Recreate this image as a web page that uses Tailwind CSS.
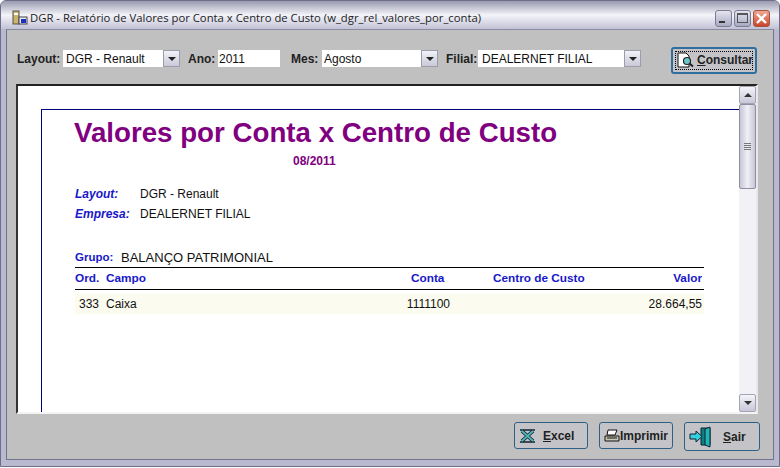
<!DOCTYPE html>
<html lang="pt">
  <head>
    <meta charset="UTF-8" />
    <title>DGR - Relatório de Valores por Conta x Centro de Custo</title>
    <script src="https://cdn.jsdelivr.net/npm/@tailwindcss/browser@4"></script>
  </head>
  <body class="w-[780px] h-[468px] overflow-hidden bg-white font-['Liberation_Sans',sans-serif]">
    <div class="w-[780px] h-[467px] flex flex-col border border-[#6e6e88] rounded-t-md overflow-hidden bg-[#b9b9cf]">
      <!-- title bar -->
      <div class="h-[28px] shrink-0 flex items-center pt-[6px] pl-[11px] pr-[9px] bg-gradient-to-b from-[#9a9ab0] via-[#f4f4fa] to-[#c2c2d6]">
        <svg class="w-[16px] h-[16px] mr-[2px]" viewBox="0 0 16 16">
          <rect x="1" y="1" width="6" height="13" fill="#c9b46a" stroke="#554" />
          <rect x="2" y="3" width="4" height="2" fill="#fff" />
          <rect x="7" y="7" width="8" height="7" fill="#e8e8e8" stroke="#445" />
          <rect x="9" y="9" width="5" height="4" fill="#1c2fc0" />
        </svg>
        <span class="font-['Open_Sans',sans-serif] text-[11.3px] text-[#222] whitespace-nowrap">DGR - Relatório de Valores por Conta x Centro de Custo (w_dgr_rel_valores_por_conta)</span>
        <div class="ml-auto flex gap-[2px]">
          <div class="w-[17px] h-[17px] rounded-[3px] border border-[#7b7b94] bg-gradient-to-b from-[#e4e4f0] to-[#a9a9c2] flex items-end pb-[3px] pl-[3px]">
            <div class="w-[6px] h-[2px] bg-[#333]"></div>
          </div>
          <div class="w-[17px] h-[17px] rounded-[3px] border border-[#7b7b94] bg-gradient-to-b from-[#e4e4f0] to-[#a9a9c2] flex items-center justify-center">
            <div class="w-[11px] h-[10px] border border-[#555] border-t-2"></div>
          </div>
          <div class="w-[17px] h-[17px] rounded-[3px] border border-[#a5523f] bg-gradient-to-b from-[#eea893] to-[#c9432a] flex items-center justify-center">
            <svg class="w-[13px] h-[13px]" viewBox="0 0 13 13"><path d="M2 2 L11 11 M11 2 L2 11" stroke="#fff" stroke-width="2.4" /></svg>
          </div>
        </div>
      </div>

      <!-- window body -->
      <div class="flex-1 min-h-0 mx-[5px] flex flex-col bg-[#c0c0c0] border-x border-b border-[#73738c] border-t border-t-[#8a8aa0] pl-[9px] pr-[15px]">
        <!-- filters -->
        <div class="h-[54px] shrink-0 flex items-center pt-[3px] text-[12px] text-[#111]">
          <b class="text-[#222] w-[46px] ml-[1px]">Layout:</b>
          <div class="w-[100px] h-[17px] flex bg-white items-center pl-[3px]">DGR - Renault</div>
          <div class="w-[17px] h-[17px] flex items-center justify-center bg-gradient-to-b from-[#f2f2f8] to-[#c9c9d8] border border-[#9c9cac]"><div class="border-x-[4px] border-x-transparent border-t-[4px] border-t-[#222]"></div></div>
          <b class="text-[#222] ml-[8px] w-[30px]">Ano:</b>
          <div class="w-[62px] h-[17px] flex bg-white items-center pl-[1px]">2011</div>
          <b class="text-[#222] ml-[11px] w-[31px]">Mes:</b>
          <div class="w-[99px] h-[17px] flex bg-white items-center pl-[2px]">Agosto</div>
          <div class="w-[17px] h-[17px] flex items-center justify-center bg-gradient-to-b from-[#f2f2f8] to-[#c9c9d8] border border-[#9c9cac]"><div class="border-x-[4px] border-x-transparent border-t-[4px] border-t-[#222]"></div></div>
          <b class="text-[#222] ml-[8px] w-[32px]">Filial:</b>
          <div class="w-[146px] h-[17px] flex bg-white items-center pl-[4px]">DEALERNET FILIAL</div>
          <div class="w-[17px] h-[17px] flex items-center justify-center bg-gradient-to-b from-[#f2f2f8] to-[#c9c9d8] border border-[#9c9cac]"><div class="border-x-[4px] border-x-transparent border-t-[4px] border-t-[#222]"></div></div>
          <button class="ml-[30px] mt-[3px] w-[86px] h-[27px] rounded-[3px] border-2 border-[#2f6f9f] bg-[#c4c4c8] p-[2px]">
            <span class="h-full flex items-center border border-dotted border-black pl-[1px] font-bold text-[12px] text-[#222]">
              <svg class="w-[20px] h-[17px] shrink-0" viewBox="0 0 20 17">
                <path d="M1 1 H9 L12 4 V15 H1 Z" fill="#fff" stroke="#111" />
                <circle cx="10" cy="9" r="3.5" fill="#6cc7c7" stroke="#222" stroke-width="1.2" />
                <path d="M12.5 11.5 L16 14.5" stroke="#222" stroke-width="2" />
              </svg>
              <span><u>C</u>onsultar</span>
            </span>
          </button>
        </div>

        <!-- report viewport -->
        <div class="h-[330px] shrink-0 flex border-t-2 border-l-2 border-t-[#222] border-l-[#333] border-b-2 border-r-2 border-b-[#f4f4f4] border-r-[#e8e8e8] bg-white">
          <div class="flex-1 min-w-0 overflow-hidden pt-[23px] pl-[23px]">
            <div class="h-[340px] border-t border-l border-[#00007f] pl-[33px]">
              <h1 class="font-bold text-[27.7px] leading-[30px] text-[#800080] mt-[8px] ml-[-1px] whitespace-nowrap">Valores por Conta x Centro de Custo</h1>
              <p class="font-bold text-[12px] leading-[14px] text-[#800080] ml-[218px] mt-[6px]">08/2011</p>
              <div class="flex items-center h-[20px] mt-[16px] text-[12px]">
                <i class="font-bold text-[#1818c8] w-[65px]">Layout:</i><span class="text-[#111]">DGR - Renault</span>
              </div>
              <div class="flex items-center h-[20px] text-[12px]">
                <i class="font-bold text-[#1818c8] w-[65px]">Empresa:</i><span class="text-[#111]">DEALERNET FILIAL</span>
              </div>
              <div class="flex items-center h-[20px] mt-[24px] w-[629px]">
                <b class="text-[11.5px] text-[#1818c8] w-[46px]">Grupo:</b><span class="text-[13px] text-[#111]">BALANÇO PATRIMONIAL</span>
              </div>
              <div class="w-[629px] h-[23px] flex items-center border-y border-black font-bold text-[11.8px] text-[#1818c8] mt-[-1px] whitespace-nowrap">
                <span class="w-[31px]">Ord.</span>
                <span class="w-[305px]">Campo</span>
                <span class="w-[33px] text-right mr-[49px]">Conta</span>
                <span class="w-[91px]">Centro de Custo</span>
                <span class="w-[118px] text-right">Valor</span>
              </div>
              <div class="w-[629px] h-[20px] mt-[4px] flex items-center bg-[#fbfbf0] text-[12px] text-[#111]">
                <span class="w-[31px] pl-[4px]">333</span>
                <span class="w-[300px]">Caixa</span>
                <span class="w-[44px] text-right">1111100</span>
                <span class="flex-1 text-right pr-[2px]">28.664,55</span>
              </div>
            </div>
          </div>
          <!-- scrollbar -->
          <div class="w-[17px] shrink-0 flex flex-col bg-[#f1f1f6]">
            <div class="h-[18px] shrink-0 flex items-center justify-center rounded-[2px] border border-[#a3a3b3] bg-gradient-to-b from-[#f4f4fa] to-[#c7c7d8]"><div class="border-x-[4px] border-x-transparent border-b-[4px] border-b-[#333]"></div></div>
            <div class="h-[85px] shrink-0 flex flex-col items-center justify-center gap-[1px] rounded-[2px] border border-[#8f8f9f] bg-gradient-to-r from-[#c6c6d8] via-[#f0f0f6] to-[#c6c6d8]">
              <div class="w-[7px] h-px bg-[#777]"></div><div class="w-[7px] h-px bg-[#777]"></div><div class="w-[7px] h-px bg-[#777]"></div><div class="w-[7px] h-px bg-[#777]"></div>
            </div>
            <div class="flex-1"></div>
            <div class="h-[18px] shrink-0 flex items-center justify-center rounded-[2px] border border-[#a3a3b3] bg-gradient-to-b from-[#f4f4fa] to-[#c7c7d8]"><div class="border-x-[4px] border-x-transparent border-t-[4px] border-t-[#333]"></div></div>
          </div>
        </div>

        <!-- footer buttons -->
        <div class="flex justify-end items-start mt-[8px] mr-[-2px] font-bold text-[12px] text-[#222]">
          <button class="w-[74px] h-[27px] rounded-[3px] border border-[#2f5f85] bg-[#c4c4c8] flex items-center pl-[4px]">
            <svg class="w-[18px] h-[14px] shrink-0" viewBox="0 0 18 14">
              <path d="M1 1 H16 M1 13 H16" stroke="#123" stroke-width="1.4" />
              <path d="M3 2 L14 12 M14 2 L3 12" stroke="#123" stroke-width="3.6" />
              <path d="M3 2 L14 12 M14 2 L3 12" stroke="#4fb8b8" stroke-width="1.8" />
            </svg>
            <span class="ml-[6px]"><u>E</u>xcel</span>
          </button>
          <button class="w-[74px] h-[27px] ml-[11px] rounded-[3px] border border-[#2f5f85] bg-[#c4c4c8] flex items-center pl-[4px]">
            <svg class="w-[16px] h-[14px] shrink-0" viewBox="0 0 16 14"><path d="M4 1 H13 L11 6 H3 Z" fill="#fff" stroke="#111" /><path d="M1 7 H15 V12 H1 Z" fill="#c8c8b8" stroke="#111" /><path d="M3 9 H13" stroke="#111" /></svg>
            <span>Imprimir</span>
          </button>
          <button class="w-[76px] h-[29px] ml-[11px] rounded-[3px] border border-[#2f5f85] bg-[#c4c4c8] flex items-center pl-[4px]">
            <svg class="w-[24px] h-[24px] shrink-0" viewBox="0 0 24 24"><path d="M12 3 H21 V20 H12 Z" fill="#0f7f80" stroke="#123" /><path d="M16 4 L21 2 V22 L16 20 Z" fill="#20b5b5" stroke="#123" /><path d="M1 9 H7 V6 L13 11.5 L7 17 V14 H1 Z" fill="#35d0e0" stroke="#123" /></svg>
            <span class="ml-[10px]"><u>S</u>air</span>
          </button>
        </div>
      </div>
      <div class="h-[6px] shrink-0"></div>
    </div>
  </body>
</html>
